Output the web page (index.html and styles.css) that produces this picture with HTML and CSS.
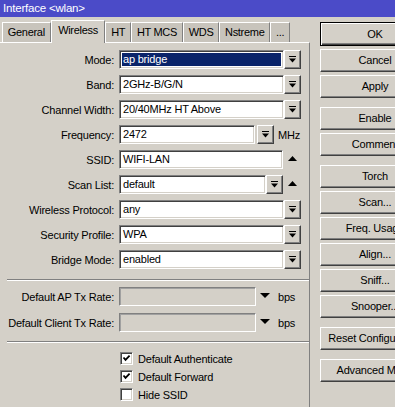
FILE: index.html
```html
<!DOCTYPE html>
<html>
<head>
<meta charset="utf-8">
<title>Interface &lt;wlan&gt;</title>
<link rel="stylesheet" href="styles.css">
</head>
<body>
<div class="titlebar">Interface &lt;wlan&gt;</div>
<div class="main">
  <div class="left">
    <div class="tabs">
      <div class="tab">General</div>
      <div class="tab active">Wireless</div>
      <div class="tab">HT</div>
      <div class="tab">HT MCS</div>
      <div class="tab">WDS</div>
      <div class="tab">Nstreme</div>
      <div class="tab">...</div>
    </div>
    <div class="panel">
      <div class="row">
        <div class="lbl">Mode:</div>
        <div class="ctl">
          <div class="field focus"><span class="sel">ap bridge</span></div>
          <div class="dd"><svg width="7" height="7" viewBox="0 0 7 7"><rect x="0" y="0" width="7" height="1" shape-rendering="crispEdges"/><path d="M0 2.5h7L3.5 6.5z"/></svg></div>
        </div>
      </div>
      <div class="row">
        <div class="lbl">Band:</div>
        <div class="ctl">
          <div class="field">2GHz-B/G/N</div>
          <div class="dd"><svg width="7" height="7" viewBox="0 0 7 7"><rect x="0" y="0" width="7" height="1" shape-rendering="crispEdges"/><path d="M0 2.5h7L3.5 6.5z"/></svg></div>
        </div>
      </div>
      <div class="row">
        <div class="lbl">Channel Width:</div>
        <div class="ctl">
          <div class="field">20/40MHz HT Above</div>
          <div class="dd"><svg width="7" height="7" viewBox="0 0 7 7"><rect x="0" y="0" width="7" height="1" shape-rendering="crispEdges"/><path d="M0 2.5h7L3.5 6.5z"/></svg></div>
        </div>
      </div>
      <div class="row">
        <div class="lbl">Frequency:</div>
        <div class="ctl short">
          <div class="field">2472</div>
          <div class="dd spaced"><svg width="7" height="7" viewBox="0 0 7 7"><rect x="0" y="0" width="7" height="1" shape-rendering="crispEdges"/><path d="M0 2.5h7L3.5 6.5z"/></svg></div>
        </div>
        <div class="unit">MHz</div>
      </div>
      <div class="row">
        <div class="lbl">SSID:</div>
        <div class="ctl">
          <div class="field">WIFI-LAN</div>
          <div class="slot"><svg width="9" height="5" viewBox="0 0 9 5"><path d="M4.5 0L9 5H0z"/></svg></div>
        </div>
      </div>
      <div class="row">
        <div class="lbl">Scan List:</div>
        <div class="ctl">
          <div class="field">default</div>
          <div class="dd"><svg width="7" height="7" viewBox="0 0 7 7"><rect x="0" y="0" width="7" height="1" shape-rendering="crispEdges"/><path d="M0 2.5h7L3.5 6.5z"/></svg></div>
          <div class="slot"><svg width="9" height="5" viewBox="0 0 9 5"><path d="M4.5 0L9 5H0z"/></svg></div>
        </div>
      </div>
      <div class="row">
        <div class="lbl">Wireless Protocol:</div>
        <div class="ctl">
          <div class="field">any</div>
          <div class="dd"><svg width="7" height="7" viewBox="0 0 7 7"><rect x="0" y="0" width="7" height="1" shape-rendering="crispEdges"/><path d="M0 2.5h7L3.5 6.5z"/></svg></div>
        </div>
      </div>
      <div class="row">
        <div class="lbl">Security Profile:</div>
        <div class="ctl">
          <div class="field">WPA</div>
          <div class="dd"><svg width="7" height="7" viewBox="0 0 7 7"><rect x="0" y="0" width="7" height="1" shape-rendering="crispEdges"/><path d="M0 2.5h7L3.5 6.5z"/></svg></div>
        </div>
      </div>
      <div class="row">
        <div class="lbl">Bridge Mode:</div>
        <div class="ctl">
          <div class="field">enabled</div>
          <div class="dd"><svg width="7" height="7" viewBox="0 0 7 7"><rect x="0" y="0" width="7" height="1" shape-rendering="crispEdges"/><path d="M0 2.5h7L3.5 6.5z"/></svg></div>
        </div>
      </div>

      <div class="sep"></div>

      <div class="row tx">
        <div class="lbl">Default AP Tx Rate:</div>
        <div class="ctl short">
          <div class="field disabled"></div>
          <div class="slot"><svg width="10" height="5" viewBox="0 0 10 5"><path d="M0 0h10L5 5z"/></svg></div>
        </div>
        <div class="unit">bps</div>
      </div>
      <div class="row tx">
        <div class="lbl">Default Client Tx Rate:</div>
        <div class="ctl short">
          <div class="field disabled"></div>
          <div class="slot"><svg width="10" height="5" viewBox="0 0 10 5"><path d="M0 0h10L5 5z"/></svg></div>
        </div>
        <div class="unit">bps</div>
      </div>

      <div class="sep second"></div>

      <div class="check">
        <div class="box"><svg width="11" height="11" viewBox="0 0 11 11"><path d="M2.5 4.5L4.5 6.8L8.6 2.6" fill="none" stroke="#000" stroke-width="1.8"/></svg></div>
        <span>Default Authenticate</span>
      </div>
      <div class="check">
        <div class="box"><svg width="11" height="11" viewBox="0 0 11 11"><path d="M2.5 4.5L4.5 6.8L8.6 2.6" fill="none" stroke="#000" stroke-width="1.8"/></svg></div>
        <span>Default Forward</span>
      </div>
      <div class="check">
        <div class="box"></div>
        <span>Hide SSID</span>
      </div>
    </div>
  </div>

  <div class="buttons">
    <div class="btn default">OK</div>
    <div class="btn">Cancel</div>
    <div class="btn">Apply</div>
    <div class="btn group">Enable</div>
    <div class="btn">Comment</div>
    <div class="btn group">Torch</div>
    <div class="btn">Scan...</div>
    <div class="btn">Freq. Usage</div>
    <div class="btn">Align...</div>
    <div class="btn">Sniff...</div>
    <div class="btn">Snooper...</div>
    <div class="btn group">Reset Configuration</div>
    <div class="btn group">Advanced Mode</div>
  </div>
</div>
</body>
</html>
```

FILE: styles.css
```css
* {
  box-sizing: border-box;
}

html, body {
  margin: 0;
  padding: 0;
}

body {
  width: 395px;
  height: 407px;
  overflow: hidden;
  background: #D4D0C8;
  font-family: "Liberation Sans", Arial, sans-serif;
  font-size: 11px;
  letter-spacing: -0.2px;
  color: #000;
}

.titlebar {
  height: 17px;
  line-height: 17px;
  padding-left: 3px;
  background: #4B4BC8;
  color: #fff;
  font-size: 11.5px;
}

.main {
  display: flex;
  height: 390px;
}

.left {
  flex: none;
  width: 310px;
  display: flex;
  flex-direction: column;
}

.tabs {
  position: relative;
  z-index: 1;
  height: 25px;
  display: flex;
  align-items: flex-end;
  padding-left: 2px;
}

.tab {
  height: 20px;
  line-height: 19px;
  padding: 0 4.8px;
  background: #C8C4BC;
  border-top: 1px solid #fff;
  border-left: 1px solid #fff;
  border-right: 1px solid #808080;
  white-space: nowrap;
  letter-spacing: -0.3px;
}

.tab.active {
  height: 23px;
  line-height: 19px;
  margin-bottom: -1px;
  padding: 0 6.5px;
  background: #D4D0C8;
}

.panel {
  flex: 1;
  display: flex;
  flex-direction: column;
  border-top: 1px solid #fff;
  border-right: 1px solid #808080;
  padding-top: 7px;
}

.row {
  display: flex;
  align-items: center;
  height: 19px;
  margin-bottom: 6px;
  flex: none;
}

.row.tx {
  margin-bottom: 7px;
}

.lbl {
  width: 114px;
  margin-right: 5px;
  text-align: right;
  white-space: nowrap;
  flex: none;
}

.ctl {
  display: flex;
  width: 182px;
  height: 19px;
  flex: none;
}

.ctl.short {
  width: 155px;
}

.field {
  flex: 1;
  min-width: 0;
  height: 19px;
  line-height: 17px;
  padding: 0 3px;
  background: #fff;
  border: 1px solid;
  border-color: #808080 #fff #fff #808080;
  box-shadow: inset 1px 1px #404040, inset -1px -1px #D4D0C8;
  white-space: nowrap;
  overflow: hidden;
}

.field.focus {
  padding: 2px;
}

.sel {
  display: block;
  height: 13px;
  line-height: 13px;
  padding-left: 1px;
  background: #0A246A;
  color: #fff;
}

.field.disabled {
  background: #D4D0C8;
  box-shadow: inset 1px 1px #A0A0A0;
}

.dd {
  flex: none;
  width: 17px;
  height: 19px;
  display: flex;
  align-items: center;
  justify-content: center;
  background: #D4D0C8;
  border: 1px solid;
  border-color: #fff #404040 #404040 #fff;
  box-shadow: inset -1px -1px #808080;
}

.dd.spaced {
  margin-left: 2px;
}

.dd svg {
  display: block;
  margin: 0 1px 1px 0;
}

.slot {
  flex: none;
  width: 18px;
  display: flex;
  align-items: center;
  justify-content: center;
}

.slot svg {
  display: block;
  margin-top: -2px;
}

.unit {
  margin-left: 4px;
  white-space: nowrap;
}

.sep {
  flex: none;
  height: 2px;
  margin: 4px 0 6px 7px;
  border-top: 1px solid #808080;
  border-bottom: 1px solid #fff;
}

.sep.second {
  margin: 2px 0 9px 7px;
}

.check {
  flex: none;
  display: flex;
  align-items: center;
  height: 13px;
  margin: 0 0 5px 120px;
  white-space: nowrap;
}

.box {
  flex: none;
  width: 13px;
  height: 13px;
  margin-right: 5px;
  background: #fff;
  border: 1px solid;
  border-color: #808080 #fff #fff #808080;
  box-shadow: inset 1px 1px #404040, inset -1px -1px #D4D0C8;
}

.box svg {
  display: block;
}

.buttons {
  flex: none;
  width: 110px;
  margin-left: 10px;
  padding-top: 5px;
  display: flex;
  flex-direction: column;
}

.btn {
  flex: none;
  height: 23px;
  line-height: 21px;
  margin-bottom: 3px;
  text-align: center;
  white-space: nowrap;
  border: 1px solid;
  border-color: #fff #404040 #404040 #fff;
  box-shadow: inset -1px -1px #808080;
}

.btn.default {
  height: 24px;
  line-height: 22px;
  border: 1px solid #000;
  box-shadow: inset 1px 1px #fff, inset -1px -1px #404040, inset -2px -2px #808080;
}

.btn.group {
  margin-top: 6px;
}
```
